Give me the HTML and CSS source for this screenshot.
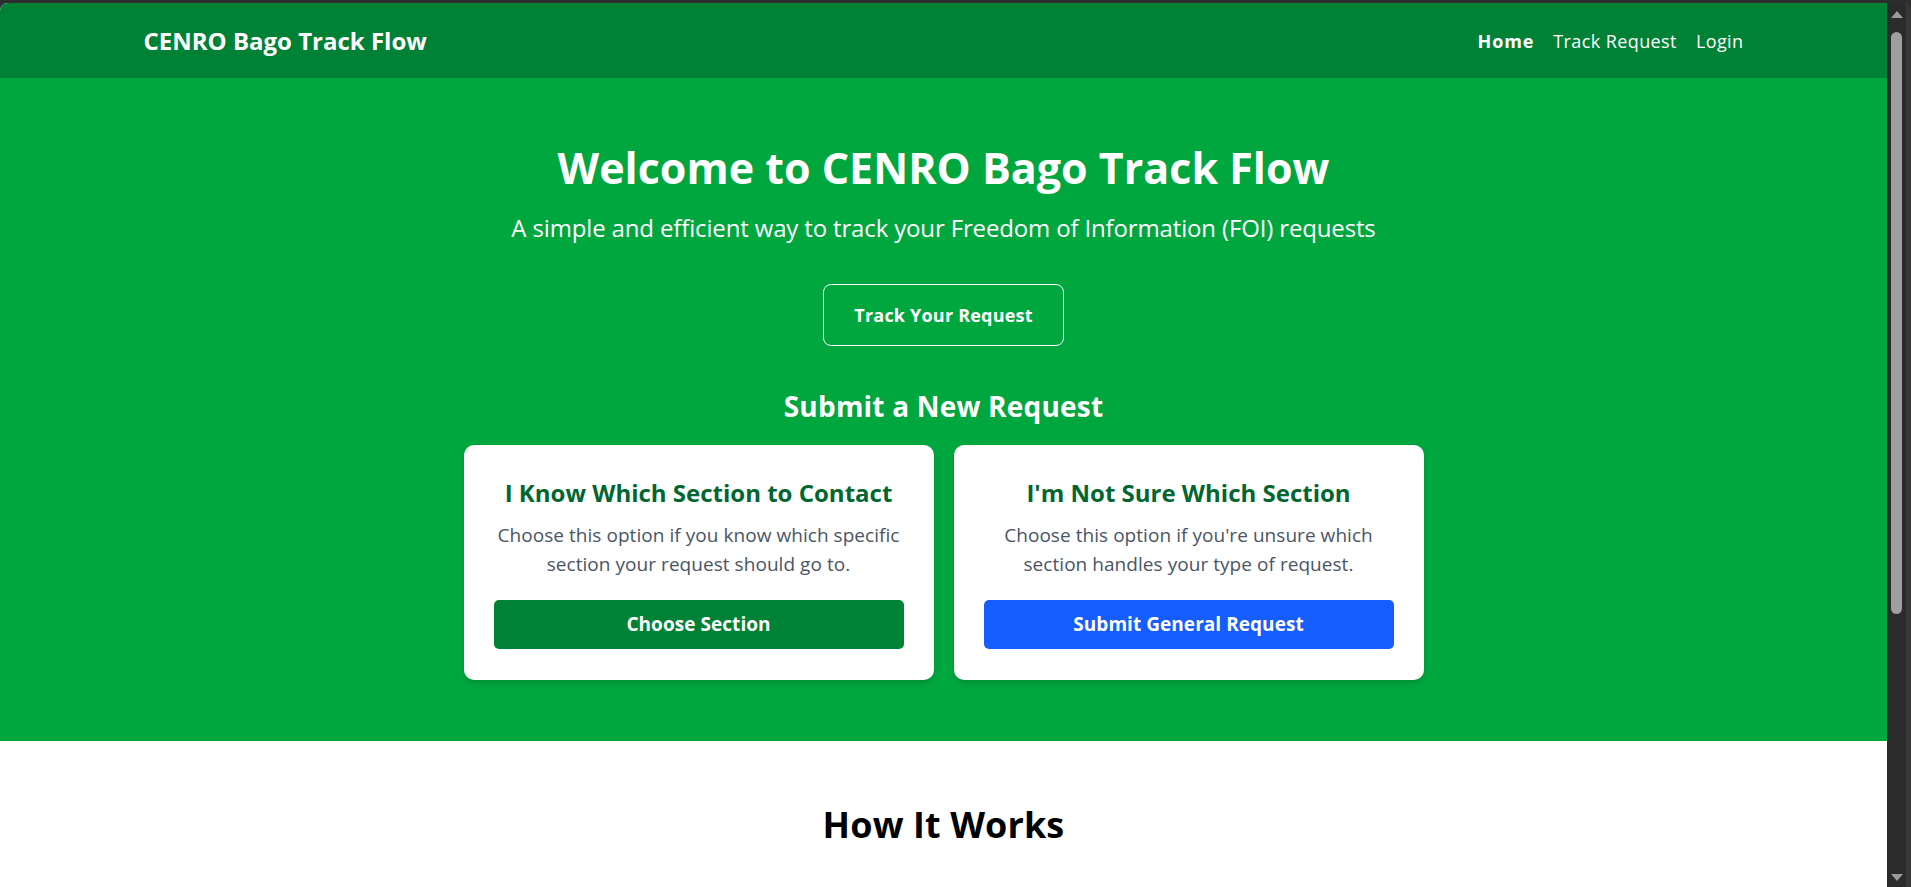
FILE: index.html
```html
<!DOCTYPE html>
<html lang="en">
<head>
<meta charset="utf-8">
<title>CENRO Bago Track Flow</title>
<link rel="stylesheet" href="styles.css">
</head>
<body>
<div class="window">
  <div class="viewport">
    <header class="navbar">
      <div class="container nav-inner">
        <a class="brand" href="#">CENRO Bago Track Flow</a>
        <nav class="nav-links">
          <a class="nav-link active" href="#">Home</a>
          <a class="nav-link" href="#">Track Request</a>
          <a class="nav-link" href="#">Login</a>
        </nav>
      </div>
    </header>

    <section class="hero">
      <h1 class="hero-title">Welcome to CENRO Bago Track Flow</h1>
      <p class="hero-lead">A simple and efficient way to track your Freedom of Information (FOI) requests</p>
      <a class="btn-outline" href="#">Track Your Request</a>
      <h2 class="hero-subtitle">Submit a New Request</h2>
      <div class="options">
        <div class="card">
          <h3 class="card-title">I Know Which Section to Contact</h3>
          <p class="card-text">Choose this option if you know which specific section your request should go to.</p>
          <a class="btn btn-green" href="#">Choose Section</a>
        </div>
        <div class="card">
          <h3 class="card-title">I'm Not Sure Which Section</h3>
          <p class="card-text">Choose this option if you're unsure which section handles your type of request.</p>
          <a class="btn btn-blue" href="#">Submit General Request</a>
        </div>
      </div>
    </section>

    <section class="how">
      <h2 class="how-title">How It Works</h2>
    </section>
  </div>
  <div class="scrollbar">
    <span class="sb-arrow sb-up"></span>
    <span class="sb-thumb"></span>
    <span class="sb-space"></span>
    <span class="sb-arrow sb-down"></span>
  </div>
</div>
</body>
</html>
```

FILE: styles.css
```css
* { box-sizing: border-box; }

html, body {
  margin: 0;
  padding: 0;
  height: 100%;
}

body {
  background: #2e2e2e;
  font-family: "Open Sans", "Noto Sans", sans-serif;
  overflow: hidden;
}

a { text-decoration: none; color: inherit; }
h1, h2, h3, p { margin: 0; }

.window {
  display: flex;
  height: 887px;
  padding-top: 3px;
}

.viewport {
  flex: 1;
  background: #ffffff;
  border-top-left-radius: 8px;
  overflow: hidden;
}

/* Navbar */
.navbar {
  background: #008236;
  color: #ffffff;
  height: 75px;
  display: flex;
  align-items: center;
}

.container {
  width: 100%;
  max-width: 1600px;
  margin: 0 auto;
}

.nav-inner {
  display: flex;
  align-items: center;
  justify-content: space-between;
}

.brand {
  font-size: 24px;
  line-height: 32px;
  font-weight: 700;
  letter-spacing: 0;
}

.nav-links {
  display: flex;
  gap: 19px;
}

.nav-link {
  font-size: 18px;
  line-height: 28px;
  letter-spacing: 0.4px;
}

.nav-link.active {
  font-weight: 700;
  letter-spacing: 0.9px;
}

/* Hero */
.hero {
  background: #00a63e;
  color: #ffffff;
  padding: 66px 0 61px;
  display: flex;
  flex-direction: column;
  align-items: center;
  text-align: center;
}

.hero-title {
  font-size: 43px;
  line-height: 48px;
  font-weight: 700;
  letter-spacing: 0;
  margin-bottom: 22px;
}

.hero-lead {
  font-size: 24px;
  line-height: 28px;
  letter-spacing: -0.15px;
  margin-bottom: 42px;
}

.btn-outline {
  display: inline-block;
  border: 1px solid #ffffff;
  border-radius: 8px;
  padding: 16px 30px;
  font-size: 18px;
  line-height: 28px;
  font-weight: 700;
  letter-spacing: 0.2px;
  margin-bottom: 42px;
}

.hero-subtitle {
  font-size: 28px;
  line-height: 36px;
  font-weight: 700;
  letter-spacing: 0.2px;
  margin-bottom: 21px;
}

.options {
  display: grid;
  grid-template-columns: 470px 470px;
  gap: 20px;
}

.card {
  background: #ffffff;
  border-radius: 10px;
  padding: 32px 30px 31px;
  box-shadow: 0 4px 6px -1px rgba(0, 0, 0, 0.12), 0 2px 4px -2px rgba(0, 0, 0, 0.1);
  display: flex;
  flex-direction: column;
  align-items: stretch;
}

.card-title {
  color: #016630;
  font-size: 24px;
  line-height: 32px;
  font-weight: 700;
  letter-spacing: 0;
  margin-bottom: 12px;
}

.card-text {
  color: #4a5565;
  font-size: 19px;
  line-height: 29.25px;
  letter-spacing: 0.05px;
  margin-bottom: 20px;
}

.btn {
  display: block;
  border-radius: 5px;
  padding: 10px 16px 11px;
  font-size: 19px;
  line-height: 28px;
  font-weight: 700;
  letter-spacing: 0.05px;
  color: #ffffff;
}

.btn-green { background: #008236; }
.btn-blue { background: #155dfc; }

/* How it works */
.how {
  padding: 64px 0 200px;
  text-align: center;
}

.how-title {
  font-size: 36px;
  line-height: 40px;
  font-weight: 700;
  color: #000000;
  letter-spacing: 0.1px;
}

/* Fake window scrollbar */
.scrollbar {
  width: 24px;
  background: #2b2b2b;
  border-right: 5px solid #383838;
  border-top-right-radius: 8px;
  display: flex;
  flex-direction: column;
  align-items: center;
  padding: 8px 0 6px;
}

.sb-arrow {
  width: 0;
  height: 0;
  border-left: 6px solid transparent;
  border-right: 6px solid transparent;
}

.sb-up {
  border-bottom: 7px solid #9a9a9a;
  margin-bottom: 14px;
}

.sb-down {
  border-top: 7px solid #9a9a9a;
}

.sb-thumb {
  width: 11px;
  height: 582px;
  background: #9f9f9f;
  border-radius: 6px;
}

.sb-space { flex: 1; }
```
